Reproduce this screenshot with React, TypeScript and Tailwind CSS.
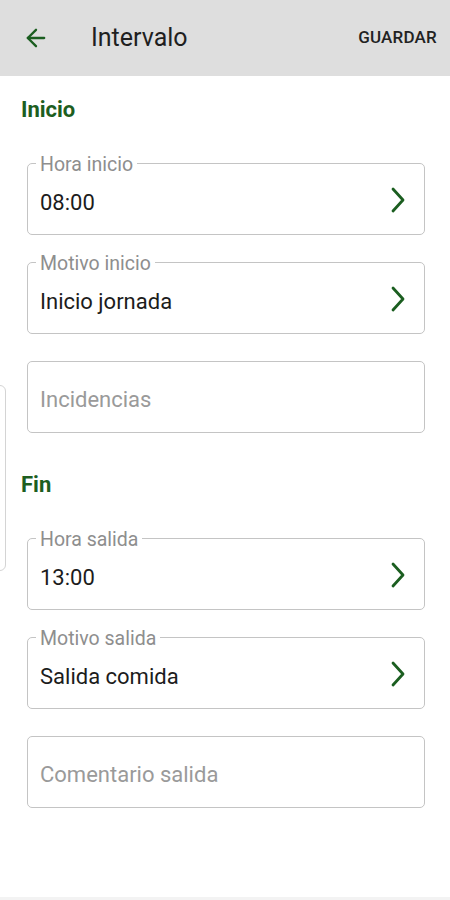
import { ArrowLeft } from "lucide-react";

interface Field {
  label: string;
  value?: string;
  select?: boolean;
}

const inicio: Field[] = [
  { label: "Hora inicio", value: "08:00", select: true },
  { label: "Motivo inicio", value: "Inicio jornada", select: true },
  { label: "Incidencias" },
];

const fin: Field[] = [
  { label: "Hora salida", value: "13:00", select: true },
  { label: "Motivo salida", value: "Salida comida", select: true },
  { label: "Comentario salida" },
];

function Chevron() {
  return (
    <svg width="16" height="28" viewBox="0 0 16 28" fill="none" className="text-[#1b5e20]">
      <polyline
        points="3,3 13,14 3,25"
        stroke="currentColor"
        strokeWidth="2.8"
        strokeLinecap="round"
        strokeLinejoin="round"
      />
    </svg>
  );
}

function FieldBox({ field }: { field: Field }) {
  const filled = field.value !== undefined;
  return (
    <div className="relative h-[72px] ml-[6px] mr-[4px] border-[1.5px] border-[#c4c4c4] rounded-[5px] flex items-center pl-[12px] pr-[18px]">
      {filled && (
        <span className="absolute -top-[10px] left-[8px] px-[4px] bg-white text-[19.5px] leading-[22px] text-[#8e8e8e]">
          {field.label}
        </span>
      )}
      <span
        className={
          filled
            ? "flex-1 text-[22px] text-[#1c1c1c] pt-[6px]"
            : "flex-1 text-[22px] text-[#9a9a9a] pt-[4px]"
        }>
        {filled ? field.value : field.label}
      </span>
      {field.select && (
        <div className="pt-[2px]">
          <Chevron />
        </div>
      )}
    </div>
  );
}

function Section({ title, fields }: { title: string; fields: Field[] }) {
  return (
    <section>
      <h2 className="h-[44px] flex items-center text-[22px] font-bold text-[#1d5e1f]">
        {title}
      </h2>
      <div className="mt-[32px] flex flex-col gap-[27px]">
        {fields.map((f) => (
          <FieldBox key={f.label} field={f} />
        ))}
      </div>
    </section>
  );
}

export default function App() {
  return (
    <div
      className="relative w-[450px] h-[900px] bg-white overflow-hidden"
      style={{ fontFamily: "Roboto, 'Noto Sans', sans-serif" }}>
      <header className="h-[76px] bg-[#dedede] flex items-center pl-[22px] pr-[13px]">
        <ArrowLeft className="w-[28px] h-[28px] text-[#1b5e20]" strokeWidth={2} />
        <h1 className="ml-[41px] flex-1 text-[25px] text-[#1f1f1f]">Intervalo</h1>
        <button className="text-[17px] font-medium text-[#222] tracking-[0.2px]">GUARDAR</button>
      </header>

      {/* bord d'un panneau derrière */}
      <div className="absolute left-[-14px] top-[385px] w-[20px] h-[186px] border border-[#d4d4d4] rounded-[6px]" />

      <main className="px-[21px] pt-[11px]">
        <Section title="Inicio" fields={inicio} />
        <div className="mt-[29px]">
          <Section title="Fin" fields={fin} />
        </div>
      </main>

      <div className="absolute bottom-0 left-0 right-0 h-[3px] bg-[#f3f3f3]" />
    </div>
  );
}
